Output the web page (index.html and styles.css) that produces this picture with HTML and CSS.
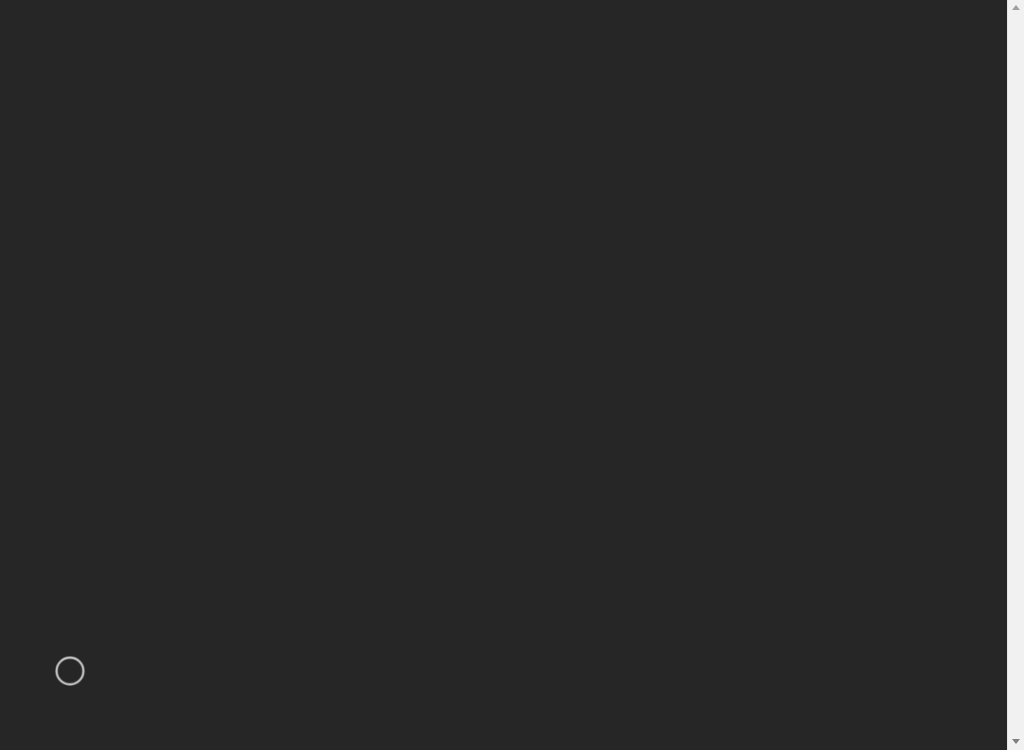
FILE: index.html
```html
<!DOCTYPE html>
<html lang="en">
<head>
    <meta charset="UTF-8">
    <meta name="viewport" content="width=device-width, initial-scale=1.0">
    <title>Loading</title>
    <link rel="stylesheet" href="styles.css">
</head>
<body>
    <div class="page">
        <div class="main">
            <svg class="spinner" width="30" height="30" viewBox="0 0 30 30">
                <circle cx="15" cy="15" r="13.4" fill="none" stroke="#6a6a6a" stroke-width="3.2" />
                <circle cx="15" cy="15" r="13.4" fill="none" stroke="#c2c2c2" stroke-width="1.6" />
            </svg>
        </div>
        <div class="scrollbar">
            <div class="arrow arrow-up"></div>
            <div class="arrow arrow-down"></div>
        </div>
    </div>
</body>
</html>
```

FILE: styles.css
```css
html,
body {
    margin: 0;
    height: 100%;
    background-color: #262626;
}

.page {
    display: flex;
    height: 750px;
}

.main {
    flex: 1;
    display: flex;
    align-items: flex-end;
    padding-left: 55px;
    padding-bottom: 64px;
    box-sizing: border-box;
}

.spinner {
    display: block;
}

.scrollbar {
    width: 17px;
    background-color: #f1f1f1;
    border-left: 1px solid #e4e4e4;
    display: flex;
    flex-direction: column;
    justify-content: space-between;
    align-items: center;
    padding: 5px 0 6px;
    box-sizing: border-box;
}

.arrow {
    width: 0;
    height: 0;
    border-left: 4px solid transparent;
    border-right: 4px solid transparent;
}

.arrow-up {
    border-bottom: 5px solid #a0a0a0;
}

.arrow-down {
    border-top: 5px solid #808080;
}
```
